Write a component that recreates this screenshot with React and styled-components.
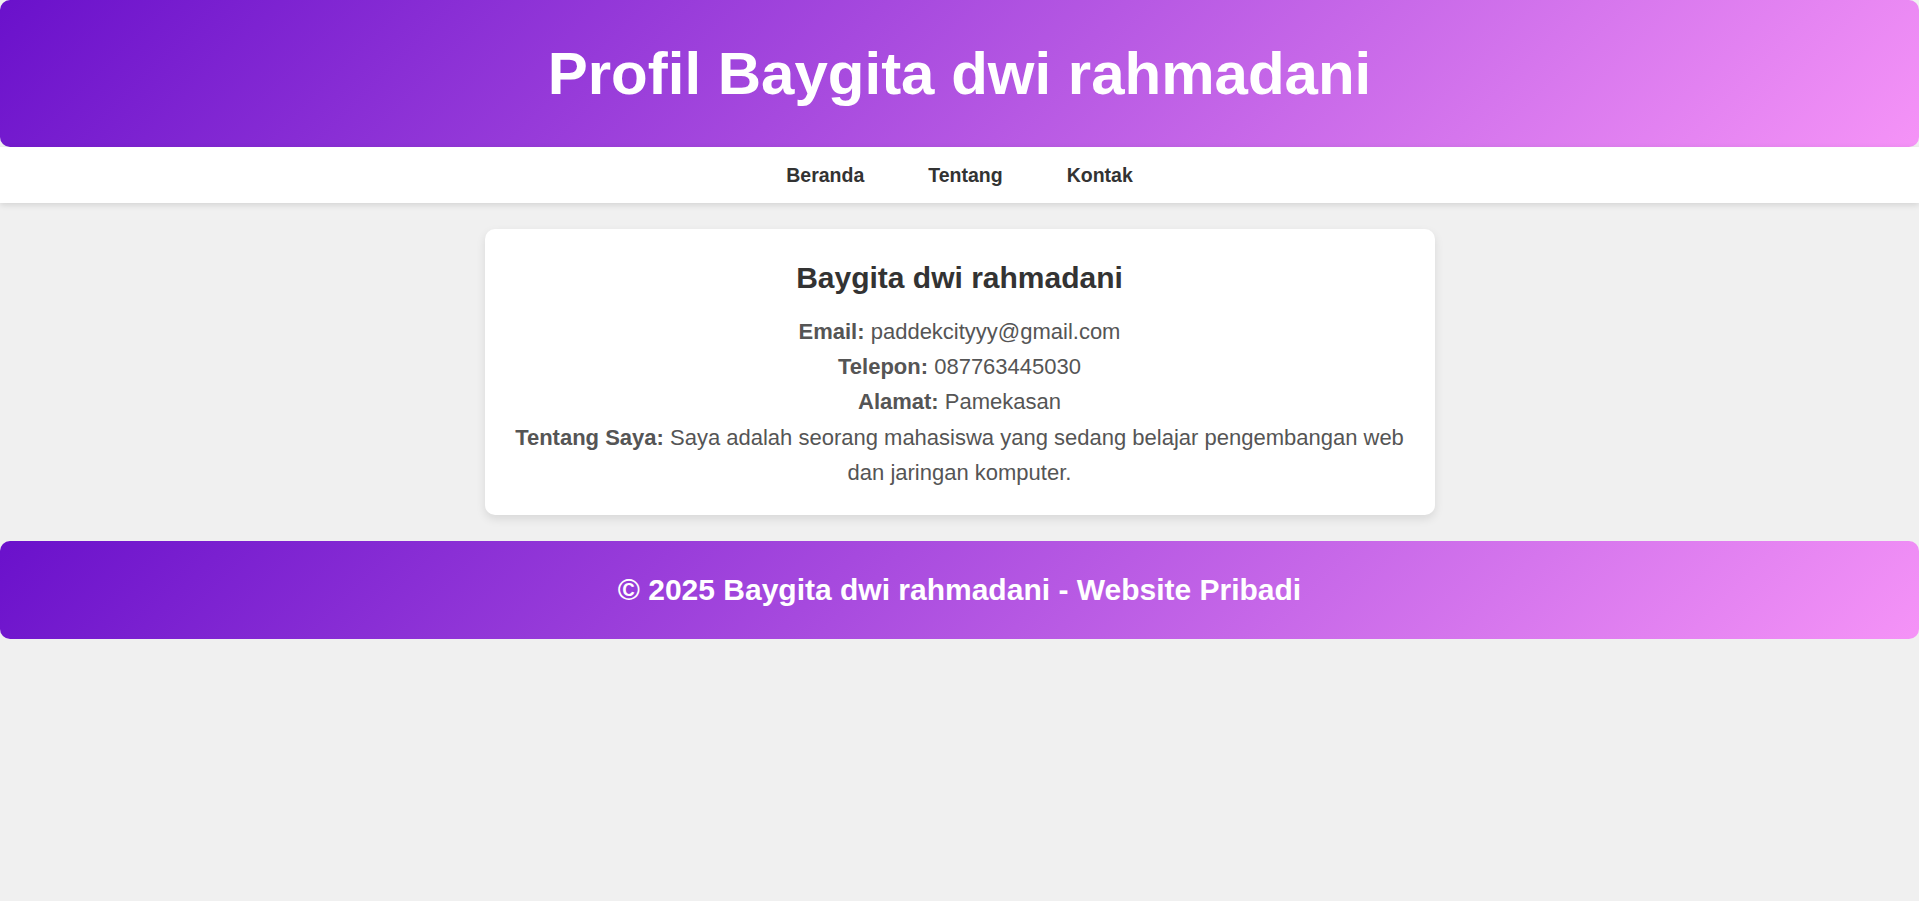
import React from 'react';
import styled, { createGlobalStyle } from 'styled-components';

const GlobalStyle = createGlobalStyle`
  body {
    margin: 0;
    background: #f0f0f0;
    font-family: "Liberation Sans", Arial, sans-serif;
    color: #333;
  }
`;

const gradient = 'linear-gradient(135deg, #6a11cb 0%, #f593f7 100%)';

const Header = styled.header`
  background: ${gradient};
  border-radius: 10px;
  padding: 39px 20px;
  text-align: center;

  h1 {
    margin: 0;
    font-size: 60px;
    line-height: 69px;
    font-weight: bold;
    color: #fff;
  }
`;

const Nav = styled.nav`
  display: flex;
  justify-content: center;
  align-items: center;
  gap: 64px;
  height: 56px;
  background: #fff;
  box-shadow: 0 2px 6px rgba(0, 0, 0, 0.12);
  position: relative;
`;

const NavLink = styled.a`
  font-size: 19.5px;
  font-weight: bold;
  color: #333;
  text-decoration: none;
  cursor: pointer;
`;

const Card = styled.section`
  max-width: 900px;
  margin: 26px auto 0;
  padding: 25px;
  background: #fff;
  border-radius: 10px;
  box-shadow: 0 4px 10px rgba(0, 0, 0, 0.1);
  text-align: center;

  h2 {
    margin: 7px 0 19px;
    font-size: 30px;
    line-height: 34px;
    color: #333;
  }
`;

const Info = styled.p`
  margin: 0;
  font-size: 22px;
  line-height: 1.6;
  color: #555;

  strong {
    color: #555;
  }
`;

const Footer = styled.footer`
  margin-top: 26px;
  background: ${gradient};
  border-radius: 10px;
  padding: 32px 20px;
  text-align: center;
  color: #fff;
  font-size: 30px;
  line-height: 34px;
  font-weight: bold;
`;

const profile = [
  ['Email', 'paddekcityyy@gmail.com'],
  ['Telepon', '087763445030'],
  ['Alamat', 'Pamekasan'],
  ['Tentang Saya', 'Saya adalah seorang mahasiswa yang sedang belajar pengembangan web dan jaringan komputer.'],
];

export default function App() {
  return (
    <>
      <GlobalStyle />
      <Header>
        <h1>Profil Baygita dwi rahmadani</h1>
      </Header>
      <Nav>
        <NavLink>Beranda</NavLink>
        <NavLink>Tentang</NavLink>
        <NavLink>Kontak</NavLink>
      </Nav>
      <Card>
        <h2>Baygita dwi rahmadani</h2>
        {profile.map(([label, value]) => (
          <Info key={label}>
            <strong>{label}:</strong> {value}
          </Info>
        ))}
      </Card>
      <Footer>© 2025 Baygita dwi rahmadani - Website Pribadi</Footer>
    </>
  );
}
